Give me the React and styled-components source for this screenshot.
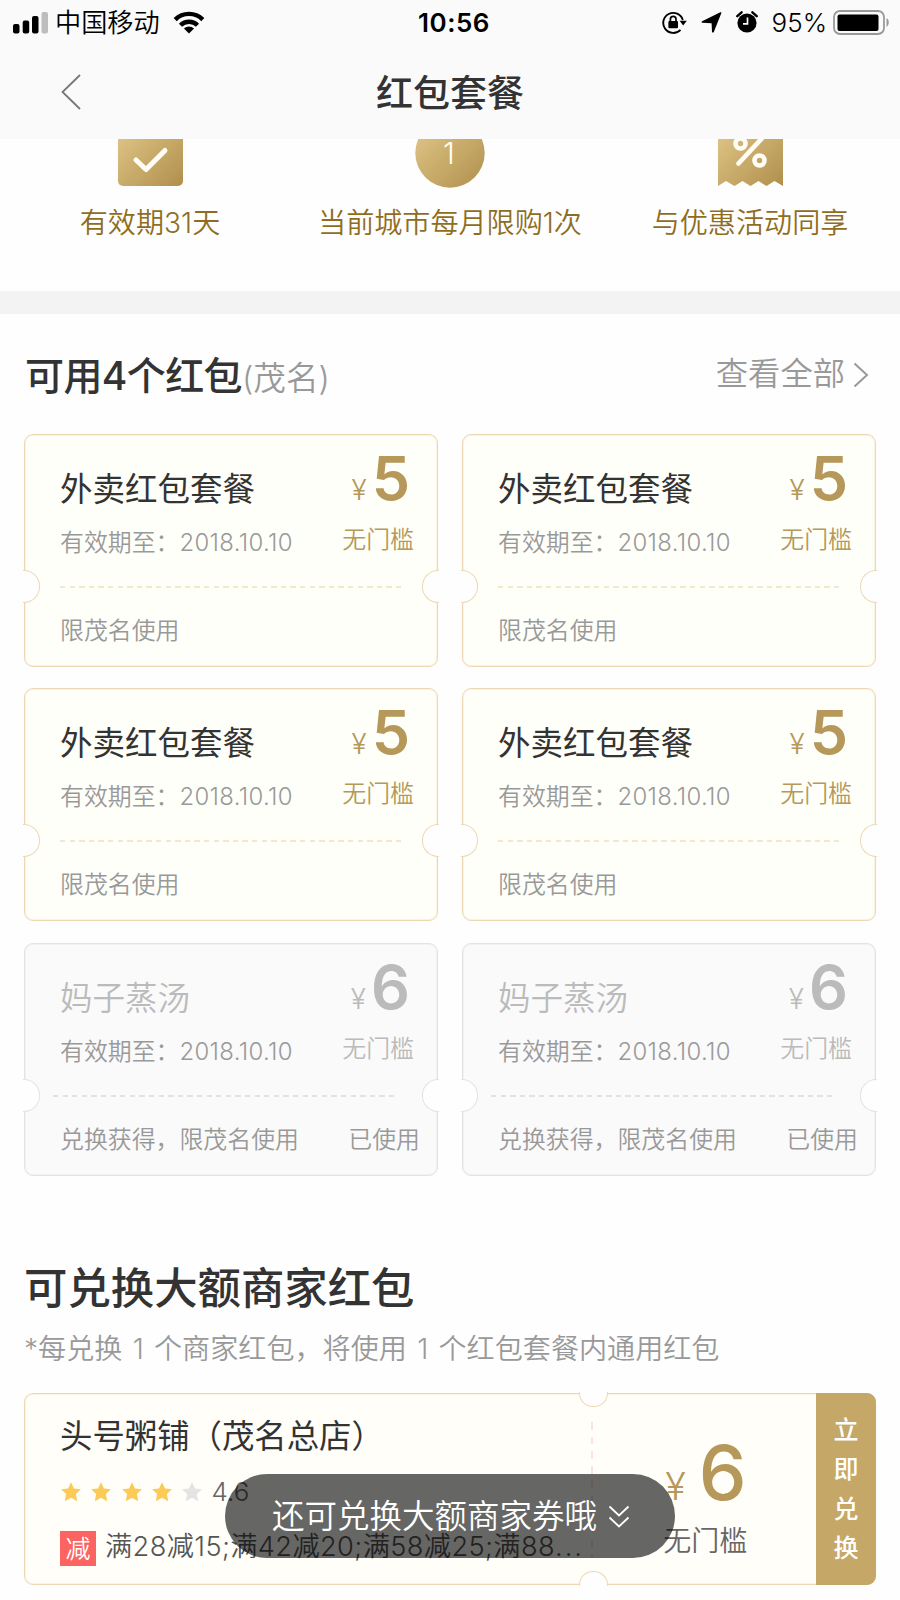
import React from 'react';
import styled, { createGlobalStyle, css } from 'styled-components';

const GlobalStyle = createGlobalStyle`
  * { box-sizing: border-box; }

  body {
    margin: 0;
    background: #fff;
    color: #333;
    font-family: Inter, 'Noto Sans CJK SC', sans-serif;
    font-weight: 350;
  }
`;

const Page = styled.div`
  position: relative;
  width: 900px;
  height: 1600px;
  overflow: hidden;
  background: #fefefe;
`;

const Header = styled.header`
  height: 139px;
  background: #fafafa;
`;

const StatusBar = styled.div`
  display: grid;
  grid-template-columns: 300px 1fr 300px;
  align-items: center;
  height: 46px;
  color: #000;
  line-height: 46px;
`;

const StatusLeft = styled.div`
  display: flex;
  align-items: center;
  padding-left: 13px;
  font-size: 26.2px;

  .signal { margin: -2px 7px 0 0; }
  .wifi { margin: -2px 0 0 13px; }
`;

const Clock = styled.div`
  padding-left: 8px;
  text-align: center;
  font-size: 26px;
  font-weight: 600;
  letter-spacing: 0.5px;
`;

const StatusRight = styled.div`
  display: flex;
  align-items: center;
  justify-content: flex-end;
  padding-right: 10px;
  font-size: 26px;

  svg { margin-top: -2px; }
  .lock { margin-right: 14px; }
  .arrow { margin-right: 14px; }
  .alarm { margin-right: 14px; }
  .battery { margin-left: 6px; }
`;

const NavBar = styled.nav`
  display: grid;
  grid-template-columns: 100px 1fr 100px;
  align-items: center;
  height: 93px;

  svg { margin: -2px 0 0 60px; }
`;

const NavTitle = styled.h1`
  margin: 2px 0 0;
  text-align: center;
  font-size: 37px;
  font-weight: 500;
  line-height: 54px;
`;

const Perks = styled.section`
  display: grid;
  grid-template-columns: 300px 300px 300px;
  height: 152px;
`;

const Perk = styled.div`
  display: flex;
  flex-direction: column;
  align-items: center;
  color: #8f6d1f;
  font-size: 28.1px;
  line-height: 40px;
  white-space: nowrap;

  svg { display: block; margin-bottom: 14px; }
`;

const Divider = styled.div`
  height: 23px;
  background: #f3f3f3;
`;

const SectionHead = styled.div`
  display: flex;
  justify-content: space-between;
  height: 120px;
  padding: 30px 31px 0 25px;
`;

const SectionTitle = styled.h2`
  margin: 0;
  padding-top: 1px;
  font-size: ${({ $size }) => $size}px;
  font-weight: 500;
  line-height: 62px;
  letter-spacing: ${({ $tight }) => ($tight ? '-0.6px' : '0')};

  span {
    color: #999;
    font-size: 32.6px;
    font-weight: 350;
    letter-spacing: 0;
  }
`;

const MoreLink = styled.a`
  display: flex;
  align-items: center;
  height: 58px;
  margin-top: -2px;
  color: #999;
  font-size: 32.3px;

  svg { margin: 8px 0 0 8px; }
`;

const CouponGrid = styled.div`
  display: grid;
  grid-template-columns: 414px 414px;
  grid-auto-rows: 233px;
  gap: 21.4px 24px;
  padding-left: 24px;
`;

const ticket = css`
  position: relative;
  border: 1px solid ${({ $used }) => ($used ? '#e3e3e3' : '#ecd9b4')};
  border-radius: 9px;
  background: ${({ $used }) => ($used ? '#fafafa' : '#fffffa')};
  box-shadow: inset 0 0 0 1px ${({ $used }) => ($used ? '#f2f2f2' : '#fbf3e2')};

  &::before,
  &::after {
    content: '';
    position: absolute;
    border: 1.5px solid ${({ $used }) => ($used ? '#e3e3e3' : '#ecd9b4')};
    background: #fefefe;
  }
`;

const CouponCard = styled.article`
  ${ticket}
  display: flex;
  flex-direction: column;

  &::before,
  &::after {
    top: 135px;
    width: 16px;
    height: 31px;
  }

  &::before {
    left: -2px;
    border-left: 0;
    border-radius: 0 16px 16px 0;
  }

  &::after {
    right: -2px;
    border-right: 0;
    border-radius: 16px 0 0 16px;
  }
`;

const CouponTop = styled.div`
  display: flex;
  justify-content: space-between;
  height: 151px;
  padding: 0 23px 0 35px;
`;

const CouponInfo = styled.div`
  h3 {
    margin: 31px 0 0;
    color: ${({ $used }) => ($used ? '#bbb' : '#333')};
    font-size: 32.5px;
    font-weight: ${({ $used }) => ($used ? 350 : 380)};
    line-height: 48px;
  }

  p {
    margin: 11px 0 0;
    color: #999;
    font-size: 23.9px;
    line-height: 36px;
    white-space: nowrap;
  }

  time { letter-spacing: 0.35px; }
`;

const CouponValue = styled.div`
  display: flex;
  flex-direction: column;
  align-items: flex-end;
  color: ${({ $used }) => ($used ? '#bbb' : '#b5985a')};

  div {
    display: flex;
    align-items: baseline;
    height: 66px;
    margin: 10px 6px 0 0;
    font-family: Inter, sans-serif;
    line-height: 66px;
  }

  small {
    margin-right: 5px;
    font-size: 28px;
  }

  strong {
    font-size: 61px;
    font-weight: 600;
    letter-spacing: -2px;
  }

  p {
    margin: 12px 0 0;
    font-size: 23.9px;
    line-height: 34px;
  }
`;

const DashedRule = styled.div`
  height: 2px;
  width: 341px;
  margin-left: ${({ $used }) => ($used ? 28 : 35)}px;
  background: repeating-linear-gradient(
    90deg,
    ${({ $used }) => ($used ? '#e2e2e2' : '#f2e8cd')} 0 5.3px,
    transparent 5.3px 9.6px
  );
`;

const CouponFoot = styled.div`
  display: flex;
  justify-content: space-between;
  padding: 25px 17px 0 35px;
  color: #999;
  font-size: 23.9px;
  line-height: 36px;
`;

const Redeem = styled.section`
  padding: 80px 24px 0;
`;

const RedeemNote = styled.p`
  margin: 9px 0 0;
  color: #999;
  font-size: 28.1px;
  line-height: 42px;
  word-spacing: 2.4px;
  white-space: nowrap;
`;

const MerchantCard = styled.article`
  ${ticket}
  display: flex;
  height: 192px;
  margin-top: 23px;
  background: #fffef9;

  &::before,
  &::after {
    left: 554px;
    width: 27px;
    height: 14px;
  }

  &::before {
    top: -2px;
    border-top: 0;
    border-radius: 0 0 14px 14px;
  }

  &::after {
    bottom: -2px;
    border-bottom: 0;
    border-radius: 14px 14px 0 0;
  }
`;

const MerchantInfo = styled.div`
  width: 567px;
  padding: 20px 0 0 35px;

  h3 {
    margin: 0;
    font-size: 32.4px;
    font-weight: 380;
    line-height: 46px;
  }
`;

const Rating = styled.div`
  display: flex;
  align-items: center;
  gap: 10.3px;
  height: 30px;
  margin: 17px 0 0 1px;
  color: #666;
  font-size: 26px;

  span { margin-left: -1px; }
`;

const Promo = styled.div`
  display: flex;
  align-items: center;
  margin-top: 21px;
  color: #555;
  font-size: 27.2px;
  line-height: 38px;
  letter-spacing: 0.4px;
  white-space: nowrap;

  b {
    width: 36px;
    height: 35px;
    margin: 3px 9px 0 0;
    background: #fb6460;
    color: #fff;
    font-size: 25px;
    font-weight: 350;
    line-height: 37px;
    letter-spacing: 0;
    text-align: center;
  }

  i {
    font-style: normal;
    letter-spacing: 2px;
  }
`;

const VerticalRule = styled.div`
  width: 2px;
  height: 136px;
  margin-top: 28px;
  background: repeating-linear-gradient(180deg, #fbe3df 0 7.5px, transparent 7.5px 14.7px);
`;

const MerchantValue = styled.div`
  width: 223px;
  padding: 34px 0 0 71px;
  color: #b5985a;

  div {
    display: flex;
    align-items: baseline;
    height: 88px;
    font-family: Inter, sans-serif;
    line-height: 88px;
  }

  small {
    margin: 0 13px 0 1px;
    font-size: 38px;
  }

  strong {
    font-size: 76px;
    font-weight: 550;
  }

  p {
    margin: 5px 0 0 -1px;
    color: #666;
    font-size: 28px;
    line-height: 40px;
  }
`;

const RedeemButton = styled.button`
  display: flex;
  flex-direction: column;
  align-items: center;
  width: 60px;
  height: 192px;
  margin: -1px -1px 0 0;
  padding: 18px 0 0;
  border: 0;
  border-radius: 0 9px 9px 0;
  background: #c5a768;
  color: #fff;
  font-family: inherit;
  font-size: 25px;
  font-weight: 500;
  line-height: 39.4px;
`;

const Toast = styled.div`
  position: absolute;
  left: 225px;
  top: 1474px;
  display: flex;
  align-items: center;
  width: 450px;
  height: 84px;
  padding: 0 0 6px 47px;
  border-radius: 42px;
  background: rgba(0, 0, 0, 0.6);
  color: #fff;
  font-size: 32.5px;
  white-space: nowrap;

  svg { margin: 8px 0 0 11px; }
`;

const coupons = [
  { name: '外卖红包套餐', amount: 5, note: '限茂名使用' },
  { name: '外卖红包套餐', amount: 5, note: '限茂名使用' },
  { name: '外卖红包套餐', amount: 5, note: '限茂名使用' },
  { name: '外卖红包套餐', amount: 5, note: '限茂名使用' },
  { name: '妈子蒸汤', amount: 6, note: '兑换获得，限茂名使用', used: true },
  { name: '妈子蒸汤', amount: 6, note: '兑换获得，限茂名使用', used: true },
];

const SignalIcon = () => (
  <svg className="signal" width="35" height="23" viewBox="0 0 35 23">
    <rect x="0" y="13" width="6.5" height="9.5" rx="2" />
    <rect x="9.7" y="9.5" width="6.5" height="13" rx="2" />
    <rect x="19" y="5" width="6.5" height="17.5" rx="2" />
    <rect x="28.5" y="1" width="6.5" height="21.5" rx="2" fill="#bdbdbd" />
  </svg>
);

const WifiIcon = () => (
  <svg className="wifi" width="32" height="23" viewBox="0 0 32 23">
    <g fill="none" stroke="#000" strokeWidth="4.4">
      <path d="M2.2 8.6a19.6 19.6 0 0 1 27.6 0" />
      <path d="M7.5 14.2a12.1 12.1 0 0 1 17 0" />
    </g>
    <path d="M10.9 17.6a7.4 7.4 0 0 1 10.2 0L16 22.6z" />
  </svg>
);

const LockIcon = () => (
  <svg className="lock" width="25" height="23" viewBox="0 0 25 23">
    <path d="M18.5 18.8a10 10 0 1 1 2.3-9.8" fill="none" stroke="#000" strokeWidth="1.9" />
    <path d="M17.6 9.8h7.2l-3.6 4.6z" />
    <rect x="6.4" y="10" width="9.6" height="7.2" rx="1" />
    <path d="M8.4 10.5V8.2a2.8 2.8 0 0 1 5.6 0v2.3" fill="none" stroke="#000" strokeWidth="1.7" />
  </svg>
);

const ArrowIcon = () => (
  <svg className="arrow" width="21" height="21" viewBox="0 0 21 21">
    <path d="M20.3 1.2 12.8 20c-.4.9-1.8.7-1.8-.3L10.600 11.300 1.400 10.800c-1.100 0-1.300-1-.3-1.500L19.300.3c.8-.3 1.300.2 1 .9z" />
  </svg>
);

const AlarmIcon = () => (
  <svg className="alarm" width="22" height="22" viewBox="0 0 22 22">
    <circle cx="11" cy="12" r="9.6" />
    <path d="M1.3 5.2 5.6 1.3M20.7 5.2 16.4 1.3" stroke="#000" strokeWidth="2.4" strokeLinecap="round" />
    <path d="M11.5 6.5v6.3H7" fill="none" stroke="#fafafa" strokeWidth="1.7" />
  </svg>
);

const BatteryIcon = () => (
  <svg className="battery" width="57" height="25" viewBox="0 0 57 25">
    <rect x="1" y="1" width="50" height="23" rx="6" fill="none" stroke="#999" strokeWidth="1.8" />
    <rect x="4.5" y="4.5" width="41" height="16.5" rx="2" />
    <path d="M53.5 8.3c3 1 3 7.4 0 8.4z" fill="#999" />
  </svg>
);

// shared gold fill for the three perk icons
const Gold = ({ id }) => (
  <defs>
    <linearGradient id={id} x1="0" y1="0" x2="1" y2="1">
      <stop offset="0" stopColor="#e3ca8c" />
      <stop offset="1" stopColor="#b08f4c" />
    </linearGradient>
  </defs>
);

const CheckPerkIcon = () => (
  <svg width="65" height="50" viewBox="0 0 65 50">
    <Gold id="gold-check" />
    <rect y="-18" width="65" height="65" rx="5" fill="url(#gold-check)" />
    <path d="M18 21 28 30.5 47 11.5" fill="none" stroke="#fffdf6" strokeWidth="5" strokeLinecap="round" strokeLinejoin="round" />
  </svg>
);

const OncePerkIcon = () => (
  <svg width="70" height="50" viewBox="0 0 70 50">
    <Gold id="gold-once" />
    <circle cx="35" cy="14" r="34.7" fill="url(#gold-once)" />
    <text x="34" y="24.5" fill="#fffdf6" fontSize="30" textAnchor="middle">1</text>
  </svg>
);

const PercentPerkIcon = () => (
  <svg width="65" height="50" viewBox="0 0 65 50">
    <Gold id="gold-percent" />
    <path d="M0-18H65V47L56.5 42 48.5 47 40.5 42 32.5 47 24.5 42 16.5 47 8 42 0 47z" fill="url(#gold-percent)" />
    <g fill="none" stroke="#fffdf6" strokeWidth="4.6">
      <circle cx="22.5" cy="4.5" r="5" />
      <circle cx="41.5" cy="21.5" r="5" />
      <path d="M46-3 20.5 24.5" strokeLinecap="round" />
    </g>
  </svg>
);

const Star = ({ on }) => (
  <svg width="20" height="20" viewBox="0 0 20 20">
    <path
      d="M10 .2 13 6.6 19.900 7.300 14.900 12 16.200 19.200 10 15.800 3.800 19.200 5.100 12 .1 7.300 7 6.600z"
      fill={on ? '#fccb57' : '#e4e4e4'}
    />
  </svg>
);

const Coupon = ({ name, amount, note, used }) => (
  <CouponCard $used={used}>
    <CouponTop>
      <CouponInfo $used={used}>
        <h3>{name}</h3>
        <p>有效期至：<time>2018.10.10</time></p>
      </CouponInfo>
      <CouponValue $used={used}>
        <div><small>¥</small><strong>{amount}</strong></div>
        <p>无门槛</p>
      </CouponValue>
    </CouponTop>
    <DashedRule $used={used} />
    <CouponFoot>
      <span>{note}</span>
      {used && <span>已使用</span>}
    </CouponFoot>
  </CouponCard>
);

const App = () => {
  return (
    <>
      <GlobalStyle />
      <Page>
        <Header>
          <StatusBar>
            <StatusLeft><SignalIcon /><span>中国移动</span><WifiIcon /></StatusLeft>
            <Clock>10:56</Clock>
            <StatusRight>
              <LockIcon /><ArrowIcon /><AlarmIcon /><span>95%</span><BatteryIcon />
            </StatusRight>
          </StatusBar>
          <NavBar>
            <svg width="22" height="38" viewBox="0 0 22 38">
              <path d="M20 2 2.5 19 20 36" fill="none" stroke="#777" strokeWidth="1.8" />
            </svg>
            <NavTitle>红包套餐</NavTitle>
          </NavBar>
        </Header>

        <Perks>
          <Perk><CheckPerkIcon />有效期31天</Perk>
          <Perk><OncePerkIcon />当前城市每月限购1次</Perk>
          <Perk><PercentPerkIcon />与优惠活动同享</Perk>
        </Perks>

        <Divider />

        <SectionHead>
          <SectionTitle $size={39} $tight>可用4个红包<span>(茂名)</span></SectionTitle>
          <MoreLink>
            查看全部
            <svg width="16" height="26" viewBox="0 0 16 26">
              <path d="M1.5 1.5 14 13 1.5 24.5" fill="none" stroke="#999" strokeWidth="2" />
            </svg>
          </MoreLink>
        </SectionHead>

        <CouponGrid>
          {coupons.map((coupon, i) => <Coupon key={i} {...coupon} />)}
        </CouponGrid>

        <Redeem>
          <SectionTitle $size={43.4}>可兑换大额商家红包</SectionTitle>
          <RedeemNote>*每兑换 1 个商家红包，将使用 1 个红包套餐内通用红包</RedeemNote>
          <MerchantCard>
            <MerchantInfo>
              <h3>头号粥铺（茂名总店）</h3>
              <Rating>
                {[1, 2, 3, 4, 5].map((n) => <Star key={n} on={n < 5} />)}
                <span>4.6</span>
              </Rating>
              <Promo><b>减</b>满28减15;满42减20;满58减25;满88<i>...</i></Promo>
            </MerchantInfo>
            <VerticalRule />
            <MerchantValue>
              <div><small>¥</small><strong>6</strong></div>
              <p>无门槛</p>
            </MerchantValue>
            <RedeemButton>
              <span>立</span><span>即</span><span>兑</span><span>换</span>
            </RedeemButton>
          </MerchantCard>
        </Redeem>

        <Toast>
          还可兑换大额商家券哦
          <svg width="22" height="24" viewBox="0 0 22 24">
            <path d="M1.5 1.5 11 10.5 20.5 1.5M1.5 12.5 11 21.5 20.5 12.5" fill="none" stroke="#fff" strokeWidth="1.8" />
          </svg>
        </Toast>
      </Page>
    </>
  );
};

export default App;
